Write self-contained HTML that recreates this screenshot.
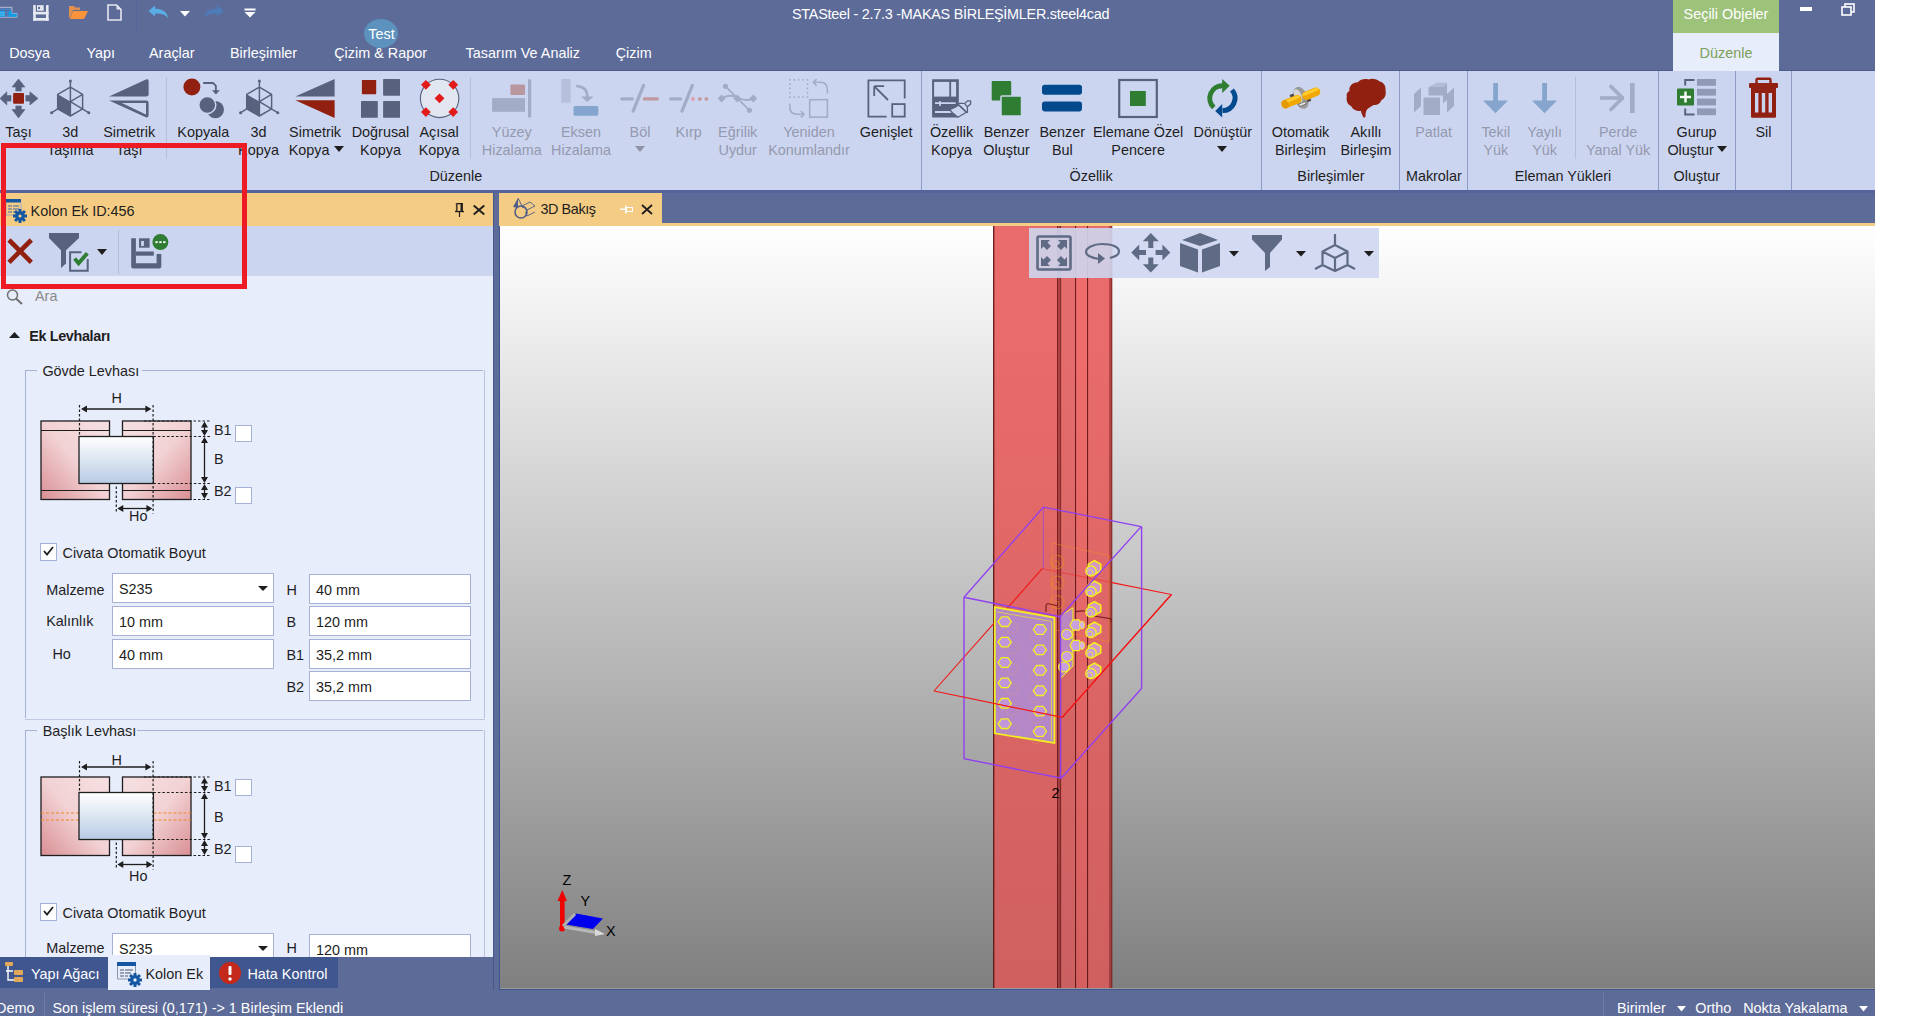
<!DOCTYPE html>
<html><head><meta charset="utf-8"><title>STASteel</title>
<style>
html,body{margin:0;padding:0;}
body{width:1914px;height:1016px;position:relative;overflow:hidden;background:#ffffff;font-family:"Liberation Sans",sans-serif;}
.t{position:absolute;white-space:nowrap;}
.r{position:absolute;box-sizing:content-box;}
.s{position:absolute;overflow:visible;}
</style></head><body>
<div class="r" style="left:0px;top:0px;width:1875px;height:1016px;background:#5D6B99;"></div>
<svg class="s" style="left:0px;top:0px" width="60" height="26" viewBox="0 0 60 26"><path d="M0 7.3H11.9V13.4H17V17.1H0" fill="none" stroke="#C4C9DE" stroke-width="0.9"/><rect x="0" y="8.3" width="11" height="1.8" fill="#4A80C2"/><rect x="0" y="10.8" width="5" height="6" fill="#10A0EA"/><rect x="0" y="12.4" width="5" height="0.8" fill="#7CC4EE"/><rect x="0" y="14.6" width="5" height="0.8" fill="#7CC4EE"/><rect x="6.1" y="10.8" width="2.1" height="6" fill="#4A80C2"/><rect x="8.5" y="10.8" width="3.3" height="6" fill="#10A0EA"/><rect x="11.8" y="13.6" width="5" height="3.2" fill="#10A0EA"/><g fill="#E8EAF2"><rect x="33.2" y="5" width="2.6" height="15.7" rx="0.5"/><rect x="46" y="5" width="2.6" height="15.7" rx="0.5"/><rect x="33.2" y="11.8" width="15.4" height="2.6"/><rect x="33.2" y="17.9" width="15.4" height="2.8" rx="0.5"/><rect x="37" y="5.2" width="6.6" height="5.5"/></g><rect x="38.1" y="6.9" width="2" height="2.2" fill="#5D6B99"/></svg>
<svg class="s" style="left:68px;top:5px" width="21" height="15" viewBox="0 0 21 15"><path d="M1 1H6L7 2.5H12V5H5L2 13H1Z" fill="#E0904E"/><path d="M5 6H20L16 14H2Z" fill="#F9933A"/></svg>
<svg class="s" style="left:107px;top:4px" width="15" height="17" viewBox="0 0 15 17"><path d="M1 1H9.5L14 5.5V16H1Z" fill="none" stroke="#E4E6F0" stroke-width="1.6"/><path d="M9.5 1V5.5H14Z" fill="#E4E6F0"/></svg>
<div class="r" style="left:136px;top:0;width:1px;height:33px;background:#56649A"></div>
<svg class="s" style="left:148px;top:5px" width="21" height="14" viewBox="0 0 21 14"><path d="M0.5 6L7 0.5V3.8C13 3.8 19 6 20 13C17 9 13 8 7 8.5V11.5Z" fill="#5AAEE6"/></svg>
<svg class="s" style="left:180px;top:11px" width="10" height="6" viewBox="0 0 10 6"><path d="M0 0H10L5 5.5Z" fill="#fff"/></svg>
<svg class="s" style="left:203px;top:5px" width="21" height="14" viewBox="0 0 21 14"><path d="M20.5 6L14 0.5V3.8C8 3.8 2 6 1 13C4 9 8 8 14 8.5V11.5Z" fill="#4E7CB8"/></svg>
<svg class="s" style="left:244px;top:8px" width="12" height="10" viewBox="0 0 12 10"><rect x="0.5" y="0.5" width="11" height="2" fill="#fff"/><path d="M0.5 4H11.5L6 9.5Z" fill="#fff"/></svg>
<div class="t" style="left:792.0px;top:6.8px;font-size:14.4px;line-height:14.4px;color:#FFFFFF;font-weight:400;letter-spacing:-0.25px">STASteel - 2.7.3 -MAKAS BİRLEŞİMLER.steel4cad</div>
<div class="r" style="left:1673px;top:0px;width:106px;height:33px;background:#9DC27A;"></div>
<div class="t" style="left:1576.0px;width:300px;text-align:center;top:6.8px;font-size:14.4px;line-height:14.4px;color:#FFFFFF;font-weight:400;">Seçili Objeler</div>
<div class="r" style="left:1673px;top:33px;width:106px;height:38px;background:#E8EDFC;"></div>
<div class="t" style="left:1576.0px;width:300px;text-align:center;top:45.6px;font-size:14.4px;line-height:14.4px;color:#7BA05A;font-weight:400;">Düzenle</div>
<div class="r" style="left:1800px;top:7px;width:12px;height:4px;background:#FFFFFF;"></div>
<svg class="s" style="left:1841px;top:3px;" width="14" height="13" viewBox="0 0 14 13"><rect x="4" y="1" width="9" height="8" fill="none" stroke="#fff" stroke-width="1.6"/><rect x="1" y="4" width="9" height="8" fill="#5D6B99" stroke="#fff" stroke-width="1.6"/></svg>
<div class="r" style="left:364px;top:19px;width:34px;height:29px;border-radius:50%;background:#5C92BD"></div>
<div class="t" style="left:231.5px;width:300px;text-align:center;top:26.7px;font-size:14.4px;line-height:14.4px;color:#FFFFFF;font-weight:400;">Test</div>
<div class="t" style="left:9.2px;top:45.6px;font-size:14.4px;line-height:14.4px;color:#FFFFFF;font-weight:400;">Dosya</div>
<div class="t" style="left:86.5px;top:45.6px;font-size:14.4px;line-height:14.4px;color:#FFFFFF;font-weight:400;">Yapı</div>
<div class="t" style="left:149.0px;top:45.6px;font-size:14.4px;line-height:14.4px;color:#FFFFFF;font-weight:400;">Araçlar</div>
<div class="t" style="left:230.0px;top:45.6px;font-size:14.4px;line-height:14.4px;color:#FFFFFF;font-weight:400;">Birleşimler</div>
<div class="t" style="left:334.2px;top:45.6px;font-size:14.4px;line-height:14.4px;color:#FFFFFF;font-weight:400;">Çizim &amp; Rapor</div>
<div class="t" style="left:465.6px;top:45.6px;font-size:14.4px;line-height:14.4px;color:#FFFFFF;font-weight:400;">Tasarım Ve Analiz</div>
<div class="t" style="left:615.7px;top:45.6px;font-size:14.4px;line-height:14.4px;color:#FFFFFF;font-weight:400;">Çizim</div>
<div class="r" style="left:0px;top:70px;width:1673px;height:1px;background:#4E5C8C;"></div>
<div class="r" style="left:1779px;top:70px;width:96px;height:1px;background:#4E5C8C;"></div>
<div class="r" style="left:0px;top:71px;width:1875px;height:119px;background:#CCD5F0;"></div>
<div class="r" style="left:0px;top:190px;width:1875px;height:3px;background:#55639A;"></div>
<div class="t" style="left:-131.5px;width:300px;text-align:center;top:124.9px;font-size:14.4px;line-height:14.4px;color:#1E1E1E;font-weight:400;">Taşı</div>
<div class="t" style="left:-79.7px;width:300px;text-align:center;top:124.9px;font-size:14.4px;line-height:14.4px;color:#1E1E1E;font-weight:400;">3d</div>
<div class="t" style="left:-79.7px;width:300px;text-align:center;top:143.1px;font-size:14.4px;line-height:14.4px;color:#1E1E1E;font-weight:400;">Taşıma</div>
<div class="t" style="left:-20.8px;width:300px;text-align:center;top:124.9px;font-size:14.4px;line-height:14.4px;color:#1E1E1E;font-weight:400;">Simetrik</div>
<div class="t" style="left:-20.8px;width:300px;text-align:center;top:143.1px;font-size:14.4px;line-height:14.4px;color:#1E1E1E;font-weight:400;">Taşı</div>
<div class="t" style="left:53.3px;width:300px;text-align:center;top:124.9px;font-size:14.4px;line-height:14.4px;color:#1E1E1E;font-weight:400;">Kopyala</div>
<div class="t" style="left:108.5px;width:300px;text-align:center;top:124.9px;font-size:14.4px;line-height:14.4px;color:#1E1E1E;font-weight:400;">3d</div>
<div class="t" style="left:108.5px;width:300px;text-align:center;top:143.1px;font-size:14.4px;line-height:14.4px;color:#1E1E1E;font-weight:400;">Kopya</div>
<div class="t" style="left:165.1px;width:300px;text-align:center;top:124.9px;font-size:14.4px;line-height:14.4px;color:#1E1E1E;font-weight:400;">Simetrik</div>
<div class="t" style="left:159.1px;width:300px;text-align:center;top:143.1px;font-size:14.4px;line-height:14.4px;color:#1E1E1E;font-weight:400;">Kopya</div>
<div class="t" style="left:230.5px;width:300px;text-align:center;top:124.9px;font-size:14.4px;line-height:14.4px;color:#1E1E1E;font-weight:400;">Doğrusal</div>
<div class="t" style="left:230.5px;width:300px;text-align:center;top:143.1px;font-size:14.4px;line-height:14.4px;color:#1E1E1E;font-weight:400;">Kopya</div>
<div class="t" style="left:289.1px;width:300px;text-align:center;top:124.9px;font-size:14.4px;line-height:14.4px;color:#1E1E1E;font-weight:400;">Açısal</div>
<div class="t" style="left:289.1px;width:300px;text-align:center;top:143.1px;font-size:14.4px;line-height:14.4px;color:#1E1E1E;font-weight:400;">Kopya</div>
<div class="t" style="left:361.8px;width:300px;text-align:center;top:124.9px;font-size:14.4px;line-height:14.4px;color:#9499AE;font-weight:400;">Yüzey</div>
<div class="t" style="left:361.8px;width:300px;text-align:center;top:143.1px;font-size:14.4px;line-height:14.4px;color:#9499AE;font-weight:400;">Hizalama</div>
<div class="t" style="left:431.0px;width:300px;text-align:center;top:124.9px;font-size:14.4px;line-height:14.4px;color:#9499AE;font-weight:400;">Eksen</div>
<div class="t" style="left:431.0px;width:300px;text-align:center;top:143.1px;font-size:14.4px;line-height:14.4px;color:#9499AE;font-weight:400;">Hizalama</div>
<div class="t" style="left:490.0px;width:300px;text-align:center;top:124.9px;font-size:14.4px;line-height:14.4px;color:#9499AE;font-weight:400;">Böl</div>
<svg class="s" style="left:635px;top:146px;" width="10" height="6" viewBox="0 0 10 6"><path d="M0 0H10L5 6Z" fill="#8E93A6"/></svg>
<div class="t" style="left:538.7px;width:300px;text-align:center;top:124.9px;font-size:14.4px;line-height:14.4px;color:#9499AE;font-weight:400;">Kırp</div>
<div class="t" style="left:587.7px;width:300px;text-align:center;top:124.9px;font-size:14.4px;line-height:14.4px;color:#9499AE;font-weight:400;">Eğrilik</div>
<div class="t" style="left:587.7px;width:300px;text-align:center;top:143.1px;font-size:14.4px;line-height:14.4px;color:#9499AE;font-weight:400;">Uydur</div>
<div class="t" style="left:659.0px;width:300px;text-align:center;top:124.9px;font-size:14.4px;line-height:14.4px;color:#9499AE;font-weight:400;">Yeniden</div>
<div class="t" style="left:659.0px;width:300px;text-align:center;top:143.1px;font-size:14.4px;line-height:14.4px;color:#9499AE;font-weight:400;">Konumlandır</div>
<div class="t" style="left:736.2px;width:300px;text-align:center;top:124.9px;font-size:14.4px;line-height:14.4px;color:#1E1E1E;font-weight:400;">Genişlet</div>
<div class="t" style="left:801.5px;width:300px;text-align:center;top:124.9px;font-size:14.4px;line-height:14.4px;color:#1E1E1E;font-weight:400;">Özellik</div>
<div class="t" style="left:801.5px;width:300px;text-align:center;top:143.1px;font-size:14.4px;line-height:14.4px;color:#1E1E1E;font-weight:400;">Kopya</div>
<div class="t" style="left:856.5px;width:300px;text-align:center;top:124.9px;font-size:14.4px;line-height:14.4px;color:#1E1E1E;font-weight:400;">Benzer</div>
<div class="t" style="left:856.5px;width:300px;text-align:center;top:143.1px;font-size:14.4px;line-height:14.4px;color:#1E1E1E;font-weight:400;">Oluştur</div>
<div class="t" style="left:912.3px;width:300px;text-align:center;top:124.9px;font-size:14.4px;line-height:14.4px;color:#1E1E1E;font-weight:400;">Benzer</div>
<div class="t" style="left:912.3px;width:300px;text-align:center;top:143.1px;font-size:14.4px;line-height:14.4px;color:#1E1E1E;font-weight:400;">Bul</div>
<div class="t" style="left:988.1px;width:300px;text-align:center;top:124.9px;font-size:14.4px;line-height:14.4px;color:#1E1E1E;font-weight:400;">Elemane Özel</div>
<div class="t" style="left:988.1px;width:300px;text-align:center;top:143.1px;font-size:14.4px;line-height:14.4px;color:#1E1E1E;font-weight:400;">Pencere</div>
<div class="t" style="left:1072.8px;width:300px;text-align:center;top:124.9px;font-size:14.4px;line-height:14.4px;color:#1E1E1E;font-weight:400;">Dönüştür</div>
<svg class="s" style="left:1217px;top:146px;" width="10" height="6" viewBox="0 0 10 6"><path d="M0 0H10L5 6Z" fill="#1E1E1E"/></svg>
<div class="t" style="left:1150.5px;width:300px;text-align:center;top:124.9px;font-size:14.4px;line-height:14.4px;color:#1E1E1E;font-weight:400;">Otomatik</div>
<div class="t" style="left:1150.5px;width:300px;text-align:center;top:143.1px;font-size:14.4px;line-height:14.4px;color:#1E1E1E;font-weight:400;">Birleşim</div>
<div class="t" style="left:1216.0px;width:300px;text-align:center;top:124.9px;font-size:14.4px;line-height:14.4px;color:#1E1E1E;font-weight:400;">Akıllı</div>
<div class="t" style="left:1216.0px;width:300px;text-align:center;top:143.1px;font-size:14.4px;line-height:14.4px;color:#1E1E1E;font-weight:400;">Birleşim</div>
<div class="t" style="left:1283.6px;width:300px;text-align:center;top:124.9px;font-size:14.4px;line-height:14.4px;color:#9499AE;font-weight:400;">Patlat</div>
<div class="t" style="left:1345.8px;width:300px;text-align:center;top:124.9px;font-size:14.4px;line-height:14.4px;color:#9499AE;font-weight:400;">Tekil</div>
<div class="t" style="left:1345.8px;width:300px;text-align:center;top:143.1px;font-size:14.4px;line-height:14.4px;color:#9499AE;font-weight:400;">Yük</div>
<div class="t" style="left:1394.6px;width:300px;text-align:center;top:124.9px;font-size:14.4px;line-height:14.4px;color:#9499AE;font-weight:400;">Yayılı</div>
<div class="t" style="left:1394.6px;width:300px;text-align:center;top:143.1px;font-size:14.4px;line-height:14.4px;color:#9499AE;font-weight:400;">Yük</div>
<div class="t" style="left:1468.1px;width:300px;text-align:center;top:124.9px;font-size:14.4px;line-height:14.4px;color:#9499AE;font-weight:400;">Perde</div>
<div class="t" style="left:1468.1px;width:300px;text-align:center;top:143.1px;font-size:14.4px;line-height:14.4px;color:#9499AE;font-weight:400;">Yanal Yük</div>
<div class="t" style="left:1546.6px;width:300px;text-align:center;top:124.9px;font-size:14.4px;line-height:14.4px;color:#1E1E1E;font-weight:400;">Gurup</div>
<div class="t" style="left:1540.6px;width:300px;text-align:center;top:143.1px;font-size:14.4px;line-height:14.4px;color:#1E1E1E;font-weight:400;">Oluştur</div>
<div class="t" style="left:1613.5px;width:300px;text-align:center;top:124.9px;font-size:14.4px;line-height:14.4px;color:#1E1E1E;font-weight:400;">Sil</div>
<svg class="s" style="left:334px;top:146px;" width="10" height="6" viewBox="0 0 10 6"><path d="M0 0H10L5 6Z" fill="#1E1E1E"/></svg>
<svg class="s" style="left:1717px;top:146px;" width="10" height="6" viewBox="0 0 10 6"><path d="M0 0H10L5 6Z" fill="#1E1E1E"/></svg>
<div class="t" style="left:305.8px;width:300px;text-align:center;top:169.1px;font-size:14.4px;line-height:14.4px;color:#1E1E1E;font-weight:400;">Düzenle</div>
<div class="t" style="left:941.1px;width:300px;text-align:center;top:169.1px;font-size:14.4px;line-height:14.4px;color:#1E1E1E;font-weight:400;">Özellik</div>
<div class="t" style="left:1180.9px;width:300px;text-align:center;top:169.1px;font-size:14.4px;line-height:14.4px;color:#1E1E1E;font-weight:400;">Birleşimler</div>
<div class="t" style="left:1283.9px;width:300px;text-align:center;top:169.1px;font-size:14.4px;line-height:14.4px;color:#1E1E1E;font-weight:400;">Makrolar</div>
<div class="t" style="left:1412.9px;width:300px;text-align:center;top:169.1px;font-size:14.4px;line-height:14.4px;color:#1E1E1E;font-weight:400;">Eleman Yükleri</div>
<div class="t" style="left:1546.8px;width:300px;text-align:center;top:169.1px;font-size:14.4px;line-height:14.4px;color:#1E1E1E;font-weight:400;">Oluştur</div>
<div class="r" style="left:166px;top:77px;width:1px;height:82px;background:#B7BFD8;"></div>
<div class="r" style="left:470px;top:77px;width:1px;height:82px;background:#B7BFD8;"></div>
<div class="r" style="left:1575px;top:77px;width:1px;height:82px;background:#B7BFD8;"></div>
<div class="r" style="left:921px;top:71px;width:1px;height:119px;background:#8F9CC4;"></div>
<div class="r" style="left:1261px;top:71px;width:1px;height:119px;background:#8F9CC4;"></div>
<div class="r" style="left:1399px;top:71px;width:1px;height:119px;background:#8F9CC4;"></div>
<div class="r" style="left:1467px;top:71px;width:1px;height:119px;background:#8F9CC4;"></div>
<div class="r" style="left:1658px;top:71px;width:1px;height:119px;background:#8F9CC4;"></div>
<div class="r" style="left:1735px;top:71px;width:1px;height:119px;background:#8F9CC4;"></div>
<div class="r" style="left:1791px;top:71px;width:1px;height:119px;background:#8F9CC4;"></div>
<svg class="s" style="left:0px;top:78px" width="40" height="42" viewBox="0 0 40 42"><path d="M18.5 1L25 9H21.3V13H15.8V9H12Z M18.5 40L25 31.5H21.3V28H15.8V31.5H12Z M0 20.4L6.8 13.8V17.5H11V23.1H6.8V27Z M38 20.4L29.9 13.8V17.5H25.8V23.1H29.9V27Z" fill="#56627E" stroke="#56627E" stroke-width="0.6" stroke-linejoin="round"/><rect x="13.1" y="15" width="10.9" height="10.8" rx="1" fill="#912010"/></svg>
<svg class="s" style="left:50px;top:78px" width="40" height="40" viewBox="0 0 40 40"><path d="M7.7 16.3L20.4 23.6V38L7.7 30.8Z" fill="#56627E"/><path d="M20.4 9.1L32.6 16.3V30.8L20.4 38L7.7 30.8V16.3Z M20.4 3V38 M20.4 23.6L32.6 16.3 M20.4 23.6L39 34.9 M7.7 30.8L1.4 34.9" fill="none" stroke="#56627E" stroke-width="1.5" stroke-linejoin="round"/><circle cx="20.4" cy="3" r="1.5" fill="#56627E"/><circle cx="1.6" cy="34.8" r="1.5" fill="#56627E"/><circle cx="38.8" cy="34.8" r="1.5" fill="#56627E"/></svg>
<svg class="s" style="left:108px;top:78px" width="42" height="42" viewBox="0 0 42 42"><path d="M1 18.6L38.5 1.3Q40.6 0.6 40.6 3V16.3Q40.6 18.6 38.3 18.6Z" fill="#56627E"/><path fill-rule="evenodd" d="M1 22.4H38.3Q40.6 22.4 40.6 24.7V37.3Q40.6 40.2 37.8 39.2Z M13.8 24.9L38 36.4V24.9Z" fill="#56627E"/></svg>
<svg class="s" style="left:183px;top:78px" width="42" height="42" viewBox="0 0 42 42"><circle cx="8.9" cy="9.1" r="8.5" fill="#912010"/><path d="M20.2 5H30.1L32.9 7.8V13" fill="none" stroke="#56627E" stroke-width="1.8"/><path d="M29 12.3H36.9L32.9 16.6Z" fill="#56627E"/><circle cx="32.4" cy="31.6" r="8.6" fill="#56627E"/><circle cx="24.3" cy="27" r="8.5" fill="#56627E" stroke="#CCD5F0" stroke-width="1.5"/></svg>
<svg class="s" style="left:239px;top:78px" width="40" height="40" viewBox="0 0 40 40"><path d="M7.7 16.3L20.4 23.6V38L7.7 30.8Z" fill="#56627E"/><path d="M20.4 9.1L32.6 16.3V30.8L20.4 38L7.7 30.8V16.3Z M20.4 3V38 M20.4 23.6L32.6 16.3 M20.4 23.6L39 34.9 M7.7 30.8L1.4 34.9" fill="none" stroke="#56627E" stroke-width="1.5" stroke-linejoin="round"/><circle cx="20.4" cy="3" r="1.5" fill="#56627E"/><circle cx="1.6" cy="34.8" r="1.5" fill="#56627E"/><circle cx="38.8" cy="34.8" r="1.5" fill="#56627E"/></svg>
<svg class="s" style="left:295px;top:78px" width="41" height="41" viewBox="0 0 41 41"><path d="M0.3 18.6L39.6 0.9V18.6Z" fill="#56627E"/><path d="M0.3 22.2H39.6V39.9Z" fill="#912010"/></svg>
<svg class="s" style="left:361px;top:78px" width="40" height="41" viewBox="0 0 40 41"><rect x="0.9" y="1.9" width="14.3" height="14.3" rx="0.6" fill="#912010"/><rect x="22.1" y="1" width="16.9" height="16.7" rx="0.6" fill="#56627E"/><rect x="0" y="23.1" width="16.8" height="16.7" rx="0.6" fill="#56627E"/><rect x="22.1" y="23.1" width="16.9" height="16.7" rx="0.6" fill="#56627E"/></svg>
<svg class="s" style="left:420px;top:78px" width="41" height="41" viewBox="0 0 41 41"><circle cx="19.6" cy="20.4" r="19.2" fill="#E2E6F0" stroke="#56627E" stroke-width="1.1"/><path d="M5.9 1.8999999999999995L10.8 6.8L5.9 11.7L1.0 6.8Z" fill="#E21A1A"/><path d="M33.2 1.8999999999999995L38.1 6.8L33.2 11.7L28.300000000000004 6.8Z" fill="#E21A1A"/><path d="M19.5 15.4L24.4 20.3L19.5 25.200000000000003L14.6 20.3Z" fill="#E21A1A"/><path d="M5.9 29.200000000000003L10.8 34.1L5.9 39.0L1.0 34.1Z" fill="#E21A1A"/><path d="M33.2 29.200000000000003L38.1 34.1L33.2 39.0L28.300000000000004 34.1Z" fill="#E21A1A"/></svg>
<svg class="s" style="left:492px;top:78px" width="40" height="41" viewBox="0 0 40 41"><rect x="18.4" y="6.5" width="14.6" height="10.4" rx="0.8" fill="#B8979E"/><rect x="0.1" y="20.1" width="32.9" height="13.7" fill="#A1ADC6"/><rect x="36" y="1" width="3.2" height="38.8" rx="1.6" fill="#A1ADC6"/></svg>
<svg class="s" style="left:561px;top:78px" width="40" height="41" viewBox="0 0 40 41"><rect x="0.2" y="1" width="9.5" height="23.7" rx="0.6" fill="#B6C0DC"/><path d="M15.2 8Q26.4 8.5 26.4 19" fill="none" stroke="#A1ADC6" stroke-width="2.6"/><path d="M20 18.6H32.5L26.2 24Z" fill="#A1ADC6"/><rect x="12.5" y="28" width="24.8" height="9.7" rx="1.5" fill="#84A5CD"/></svg>
<svg class="s" style="left:620px;top:78px" width="40" height="40" viewBox="0 0 40 40"><path d="M1.9 20.9H12.2 M23.5 7.5L13.2 33.1" stroke="#A1ADC6" stroke-width="3.3" stroke-linecap="round"/><path d="M24.4 20.9H37.4" stroke="#C0999F" stroke-width="3.3" stroke-linecap="round"/></svg>
<svg class="s" style="left:669px;top:78px" width="40" height="40" viewBox="0 0 40 40"><path d="M1.7 20.9H11.7 M23.3 7.5L13 33.1" stroke="#A1ADC6" stroke-width="3.3" stroke-linecap="round"/><circle cx="24" cy="20.9" r="2" fill="#E3A0AE"/><circle cx="30.8" cy="20.9" r="2" fill="#C59DA5"/><circle cx="37.4" cy="20.9" r="2" fill="#C59DA5"/></svg>
<svg class="s" style="left:718px;top:78px" width="40" height="40" viewBox="0 0 40 40"><path d="M3.6 20.5Q11 15.5 19.3 19.5Q27 24 35.3 20.5" fill="none" stroke="#A1ADC6" stroke-width="2"/><path d="M7.5 8.3L31.5 32.3" stroke="#A1ADC6" stroke-width="1.8"/><path d="M3.6 16.6L7.5 20.5L3.6 24.4L-0.3 20.5Z M19.3 16.6L23.2 20.5L19.3 24.4L15.4 20.5Z M35.3 16.6L39.2 20.5L35.3 24.4L31.4 20.5Z" fill="#A1ADC6"/><circle cx="7.5" cy="8.3" r="2.6" fill="#A1ADC6"/><circle cx="31.5" cy="32.3" r="2.6" fill="#A1ADC6"/></svg>
<svg class="s" style="left:789px;top:78px" width="40" height="41" viewBox="0 0 40 41"><rect x="0.15" y="1.05" width="1.6" height="1.6" fill="#A1ADC6"/><rect x="4.52" y="1.05" width="1.6" height="1.6" fill="#A1ADC6"/><rect x="8.89" y="1.05" width="1.6" height="1.6" fill="#A1ADC6"/><rect x="13.26" y="1.05" width="1.6" height="1.6" fill="#A1ADC6"/><rect x="17.63" y="1.05" width="1.6" height="1.6" fill="#A1ADC6"/><rect x="0.15" y="18.25" width="1.6" height="1.6" fill="#A1ADC6"/><rect x="4.52" y="18.25" width="1.6" height="1.6" fill="#A1ADC6"/><rect x="8.89" y="18.25" width="1.6" height="1.6" fill="#A1ADC6"/><rect x="13.26" y="18.25" width="1.6" height="1.6" fill="#A1ADC6"/><rect x="17.63" y="18.25" width="1.6" height="1.6" fill="#A1ADC6"/><rect x="0.15" y="5.35" width="1.6" height="1.6" fill="#A1ADC6"/><rect x="0.15" y="9.65" width="1.6" height="1.6" fill="#A1ADC6"/><rect x="0.15" y="13.95" width="1.6" height="1.6" fill="#A1ADC6"/><rect x="17.65" y="5.35" width="1.6" height="1.6" fill="#A1ADC6"/><rect x="17.65" y="9.65" width="1.6" height="1.6" fill="#A1ADC6"/><rect x="17.65" y="13.95" width="1.6" height="1.6" fill="#A1ADC6"/><rect x="20.7" y="21.7" width="17.7" height="17.4" fill="none" stroke="#A1ADC6" stroke-width="1.6"/><path d="M38.4 15.4V11.8Q38.4 4.2 31.2 4.2H24.5" fill="none" stroke="#A1ADC6" stroke-width="1.6"/><path d="M27.6 1.2L24.4 4.2L27.6 7.6" fill="none" stroke="#A1ADC6" stroke-width="1.6"/><path d="M0.9 25.6V29.6Q0.9 36.2 8.2 36.2H15" fill="none" stroke="#A1ADC6" stroke-width="1.6"/><path d="M11.8 33L15 36.2L11.8 39.4" fill="none" stroke="#A1ADC6" stroke-width="1.6"/></svg>
<svg class="s" style="left:867px;top:78px" width="40" height="41" viewBox="0 0 40 41"><path d="M19.6 38.6H1.4V2.4H37.7V20.4" fill="none" stroke="#56627E" stroke-width="1.8"/><rect x="25.2" y="26.1" width="12.5" height="12.5" fill="none" stroke="#56627E" stroke-width="1.8"/><path d="M21 22L7.6 8.6 M7.2 8.2H17.1 M7.2 8.2V18" fill="none" stroke="#56627E" stroke-width="1.8"/></svg>
<svg class="s" style="left:932px;top:78px" width="40" height="41" viewBox="0 0 40 41"><path d="M0.1 1.2H26.8V27L17.7 31.7L20.4 34.7L26 39.6H0.1Z" fill="#56627E"/><rect x="2.1" y="3.9" width="15.2" height="14.7" fill="#CCD5F0"/><rect x="19.1" y="3.9" width="5" height="14.7" fill="#CCD5F0"/><path d="M3 25.2H23.6 M3 34H19.5" stroke="#CCD5F0" stroke-width="1.8"/><path d="M8 22.9V27.9" stroke="#CCD5F0" stroke-width="1.6"/><path d="M17.7 31.7L23.2 29.2L26.8 27L34.5 34.2L25.9 39.2L20.4 34.7Z" fill="#CCD5F0" stroke="#56627E" stroke-width="1.3" stroke-linejoin="round"/><path d="M26.8 25.4H32.2 M26.8 27L34.5 34.2 M35.4 28.8V35.1" stroke="#56627E" stroke-width="1.3"/><path d="M32.7 25.6L35.4 22.9H38.6V26.1L35.4 28.8Z" fill="#CCD5F0" stroke="#56627E" stroke-width="1.3" stroke-linejoin="round"/></svg>
<svg class="s" style="left:991px;top:81px" width="32" height="36" viewBox="0 0 32 36"><rect x="0.7" y="0" width="19.5" height="19.5" rx="1" fill="#2F7D32"/><rect x="10" y="15" width="20.5" height="20" rx="1" fill="#2F7D32" stroke="#CCD5F0" stroke-width="1.5"/></svg>
<svg class="s" style="left:1042px;top:84px" width="41" height="29" viewBox="0 0 41 29"><rect x="0" y="0.8" width="40" height="10" rx="2.8" fill="#024A8D"/><rect x="0" y="17.4" width="40" height="10" rx="2.8" fill="#024A8D"/></svg>
<svg class="s" style="left:1118px;top:78px" width="41" height="41" viewBox="0 0 41 41"><rect x="1.2" y="2" width="37.6" height="37" fill="none" stroke="#56627E" stroke-width="2.2"/><rect x="12" y="13" width="15.8" height="15" fill="#2F7D32"/></svg>
<svg class="s" style="left:1206px;top:78px" width="33" height="41" viewBox="0 0 33 41"><path d="M7.8 29.5A12.5 12.5 0 0 1 17 7.8" fill="none" stroke="#2F7D32" stroke-width="5"/><path d="M16.2 0.9L23.7 7.7L16.2 15Z" fill="#2F7D32"/><path d="M26 12A12.5 12.5 0 0 1 16.5 32.6" fill="none" stroke="#024A8D" stroke-width="5"/><path d="M16.2 26L9.2 32.9L16.2 39.6Z" fill="#024A8D"/></svg>
<svg class="s" style="left:1278px;top:84px" width="44" height="28" viewBox="0 0 44 28"><g transform="translate(22.5 14) rotate(-22)"><ellipse cx="0.5" cy="0" rx="6.8" ry="11.5" fill="#9A9A9A"/><ellipse cx="-1.5" cy="-2.5" rx="3.5" ry="7.5" fill="#D6D6D6"/><rect x="-9" y="-7" width="4" height="3" fill="#4E4E4E"/><rect x="5" y="3.5" width="4" height="3" fill="#4E4E4E"/><rect x="2" y="-4.3" width="19" height="8.6" rx="4.3" fill="#F0A800"/><rect x="3" y="-3.5" width="17" height="3" rx="1.5" fill="#FFCB2E"/><rect x="-20.5" y="-4.3" width="21.5" height="8.6" rx="4.3" fill="#F0A800"/><rect x="-19.5" y="-3.5" width="19.5" height="3" rx="1.5" fill="#FFCB2E"/><ellipse cx="-16.5" cy="0" rx="3.2" ry="4.3" fill="#E29A00"/><rect x="-4" y="5" width="7" height="2.6" fill="#E8E8E8" stroke="#555" stroke-width="0.6"/></g></svg>
<svg class="s" style="left:1346px;top:78px" width="41" height="41" viewBox="0 0 41 41"><path d="M3.5 13C2.5 8 7 4 12 4.2C14 1.5 19 0.5 22.5 1.5C26 0 31 0.8 33.5 3.5C37.5 4 40.2 8 39.5 12.5C40.5 16.5 38.8 20.8 35.5 22C34.5 25.5 31 27.5 27.5 27C25.5 28.5 23 29.5 21.5 31C20 32.5 19.5 35.5 19.5 37.5C19.5 38.8 18.8 39.8 18 39.8C16.5 38.5 15.5 35.5 15 33C11 33.5 6.5 31.5 5 28C1.5 26.5 0 22.5 0.8 19C0 16 1.5 13.8 3.5 13Z" fill="#912010"/></svg>
<svg class="s" style="left:1414px;top:82px" width="41" height="34" viewBox="0 0 41 34"><path d="M14.5 5L23 0.5H33L29 5Z" fill="#B4BDD6"/><rect x="14.5" y="5" width="14.5" height="8.5" fill="#A1ADC6"/><path d="M29 5L33 1V18L29 21.5Z" fill="#A1ADC6"/><rect x="9.5" y="15.5" width="16.5" height="17.5" fill="#A1ADC6"/><path d="M0 12L7 5.5V24L0 30.5Z" fill="#A1ADC6"/><path d="M33 12L40 5.5V24L33 30.5Z" fill="#A1ADC6"/></svg>
<svg class="s" style="left:1483px;top:83px" width="26" height="31" viewBox="0 0 26 31"><rect x="10.2" y="0" width="4.8" height="20" fill="#85A5CD"/><path d="M0 17.5H25L12.5 30.3Z" fill="#85A5CD"/></svg>
<svg class="s" style="left:1532px;top:83px" width="26" height="31" viewBox="0 0 26 31"><rect x="10.2" y="0" width="4.8" height="20" fill="#85A5CD"/><path d="M0 17.5H25L12.5 30.3Z" fill="#85A5CD"/></svg>
<svg class="s" style="left:1600px;top:83px" width="36" height="31" viewBox="0 0 36 31"><path d="M0 15H24" stroke="#A1ADC6" stroke-width="3.6"/><path d="M11 3.5L22.5 15L11 26.5" fill="none" stroke="#A1ADC6" stroke-width="3.8" stroke-linecap="round" stroke-linejoin="round"/><rect x="30" y="0" width="4.6" height="30" fill="#A1ADC6"/></svg>
<svg class="s" style="left:1677px;top:78px" width="40" height="39" viewBox="0 0 40 39"><rect x="20" y="1" width="19" height="6.8" fill="#8F9AB6"/><rect x="20" y="10.8" width="19" height="6.8" fill="#8F9AB6"/><rect x="20" y="20.6" width="19" height="6.8" fill="#8F9AB6"/><rect x="20" y="30.4" width="19" height="6.8" fill="#8F9AB6"/><path d="M17.5 2H8.2V7.5 M8.2 30.5V36.6H17.5" fill="none" stroke="#56627E" stroke-width="2"/><rect x="0" y="10.5" width="17" height="17" rx="1" fill="#2F7D32"/><path d="M8.5 13.5V24.5 M3 19H14" stroke="#fff" stroke-width="2.4"/></svg>
<svg class="s" style="left:1749px;top:78px" width="30" height="41" viewBox="0 0 30 41"><path d="M7.5 6V2Q7.5 0.8 8.7 0.8H20.3Q21.5 0.8 21.5 2V6" fill="none" stroke="#912010" stroke-width="2.4"/><rect x="0" y="5" width="29" height="5" rx="1" fill="#912010"/><path d="M2 10H27V38.8Q27 39.8 26 39.8H3Q2 39.8 2 38.8Z" fill="#912010"/><rect x="6" y="15" width="3.4" height="19.5" fill="#CCD5F0"/><rect x="12.8" y="15" width="3.4" height="19.5" fill="#CCD5F0"/><rect x="19.6" y="15" width="3.4" height="19.5" fill="#CCD5F0"/></svg>
<div class="r" style="left:0px;top:193px;width:493px;height:33px;background:#F5CC84;"></div>
<svg class="s" style="left:6px;top:199px" width="21" height="24" viewBox="0 0 21 24"><rect x="0" y="0" width="15" height="3.5" fill="#1457A0"/><path d="M0 3.5V16H10" fill="none" stroke="#A0A8BC" stroke-width="1"/><path d="M15 3.5V10" stroke="#A0A8BC" stroke-width="1"/><path d="M2 7H6 M7 7H13 M2 10H6 M7 10H13 M2 13H6 M7 13H10" stroke="#7E889E" stroke-width="1.4"/><g transform="translate(14 17)"><circle r="4.8" fill="#1457A0"/><circle r="1.6" fill="#F5CC84"/><rect x="-1.5" y="-7" width="3" height="3.5" fill="#1457A0" transform="rotate(0)"/><rect x="-1.5" y="-7" width="3" height="3.5" fill="#1457A0" transform="rotate(45)"/><rect x="-1.5" y="-7" width="3" height="3.5" fill="#1457A0" transform="rotate(90)"/><rect x="-1.5" y="-7" width="3" height="3.5" fill="#1457A0" transform="rotate(135)"/><rect x="-1.5" y="-7" width="3" height="3.5" fill="#1457A0" transform="rotate(180)"/><rect x="-1.5" y="-7" width="3" height="3.5" fill="#1457A0" transform="rotate(225)"/><rect x="-1.5" y="-7" width="3" height="3.5" fill="#1457A0" transform="rotate(270)"/><rect x="-1.5" y="-7" width="3" height="3.5" fill="#1457A0" transform="rotate(315)"/></g></svg>
<div class="t" style="left:30.6px;top:203.8px;font-size:14.4px;line-height:14.4px;color:#1E1E1E;font-weight:400;">Kolon Ek ID:456</div>
<svg class="s" style="left:454px;top:202px" width="12" height="16" viewBox="0 0 12 16"><rect x="1.9" y="1" width="7" height="1.3" fill="#1E1E1E"/><rect x="1.9" y="1" width="1.7" height="8.5" fill="#4A3E2C"/><rect x="6.5" y="1" width="2.4" height="8.5" fill="#1E1E1E"/><rect x="1" y="8.9" width="9" height="1.3" fill="#1E1E1E"/><rect x="4.9" y="10" width="1.2" height="5" fill="#1E1E1E"/></svg><svg class="s" style="left:473px;top:205px" width="12" height="10" viewBox="0 0 12 10"><path d="M0.7 0.5L11.3 9.5 M11.3 0.5L0.7 9.5" stroke="#1E1E1E" stroke-width="1.9"/></svg>
<div class="r" style="left:0px;top:226px;width:493px;height:50px;background:#CCD5F0;"></div>
<svg class="s" style="left:5px;top:236px" width="30" height="30" viewBox="0 0 30 30"><path d="M4 4L26.3 26.3 M26.3 4L4 26.3" stroke="#912010" stroke-width="4.6"/></svg>
<svg class="s" style="left:48px;top:233px" width="42" height="40" viewBox="0 0 42 40"><path d="M1 0H31V4.9L18 17.2V30.5L13 35V17.2L1 4.9Z" fill="#56627E"/><path d="M33.5 19.2H22.1V37.8H39.7V26" fill="none" stroke="#56627E" stroke-width="2"/><path d="M26.2 25.2L30.6 30.6L39.6 20" fill="none" stroke="#CCD5F0" stroke-width="6.5"/><path d="M26.6 25.6L30.6 30.3L39.3 20.2" fill="none" stroke="#2F7D32" stroke-width="3.8"/></svg>
<svg class="s" style="left:97px;top:249px" width="10" height="6" viewBox="0 0 10 6"><path d="M0 0H10L5 6Z" fill="#1E1E1E"/></svg>
<div class="r" style="left:118px;top:230px;width:1px;height:44px;background:#B4BCD6"></div>
<svg class="s" style="left:131px;top:232px" width="40" height="38" viewBox="0 0 40 38"><path d="M0.2 6.3H4.9V31.3H25.6V21.9H30.3V34.4Q30.3 36.4 28.3 36.4H2.2Q0.2 36.4 0.2 34.4Z" fill="#56627E"/><rect x="4.9" y="19.5" width="17.9" height="4.2" fill="#56627E"/><rect x="8" y="6.3" width="10.6" height="9.4" fill="#56627E"/><rect x="10.1" y="9" width="2.8" height="5" fill="#CCD5F0"/><circle cx="29.4" cy="10.1" r="8.6" fill="#CCD5F0"/><circle cx="29.4" cy="10.1" r="8" fill="#2F7D32"/><rect x="24.4" y="9.2" width="2.3" height="1.9" fill="#fff"/><rect x="28.3" y="9.2" width="2.3" height="1.9" fill="#fff"/><rect x="32.2" y="9.2" width="2.3" height="1.9" fill="#fff"/></svg>
<div class="r" style="left:0px;top:276px;width:493px;height:681px;background:#E8EDFC;"></div>
<div style="position:absolute;left:0;top:0;width:493px;height:957px;overflow:hidden"><svg class="s" style="left:6px;top:289px" width="19" height="16" viewBox="0 0 19 16"><circle cx="6.5" cy="6" r="5" fill="none" stroke="#707070" stroke-width="1.5"/><path d="M10 9.5L16 15" stroke="#707070" stroke-width="2"/></svg>
<div class="t" style="left:35.0px;top:289.3px;font-size:14.4px;line-height:14.4px;color:#8A8A8A;font-weight:400;">Ara</div>
<svg class="s" style="left:9px;top:332px" width="11" height="6" viewBox="0 0 11 6"><path d="M0 6L5.5 0L11 6Z" fill="#1E1E1E"/></svg>
<div class="t" style="left:29.2px;top:328.8px;font-size:14.4px;line-height:14.4px;color:#1E1E1E;font-weight:700;letter-spacing:-0.35px">Ek Levhaları</div>
<div class="r" style="left:25px;top:370px;width:1px;height:348px;background:#A5B2D6;"></div>
<div class="r" style="left:25px;top:370px;width:12px;height:1px;background:#A5B2D6;"></div>
<div class="r" style="left:142px;top:370px;width:341px;height:1px;background:#A5B2D6;"></div>
<div class="r" style="left:484px;top:370px;width:1px;height:348px;background:#B8C2DE;"></div>
<div class="r" style="left:25px;top:719px;width:460px;height:1px;background:#BFC8E2;"></div>
<div class="t" style="left:42.4px;top:363.6px;font-size:14.4px;line-height:14.4px;color:#1E1E1E;font-weight:400;">Gövde Levhası</div>
<div class="r" style="left:25px;top:730px;width:1px;height:369px;background:#A5B2D6;"></div>
<div class="r" style="left:25px;top:730px;width:12px;height:1px;background:#A5B2D6;"></div>
<div class="r" style="left:137px;top:730px;width:346px;height:1px;background:#A5B2D6;"></div>
<div class="r" style="left:484px;top:730px;width:1px;height:369px;background:#B8C2DE;"></div>
<div class="r" style="left:25px;top:1100px;width:460px;height:1px;background:#BFC8E2;"></div>
<div class="t" style="left:42.7px;top:723.6px;font-size:14.4px;line-height:14.4px;color:#1E1E1E;font-weight:400;">Başlık Levhası</div>
<svg class="s" style="left:31px;top:389px" width="230" height="140"><defs><linearGradient id="pg1" x1="0" y1="0" x2="1" y2="1"><stop offset="0" stop-color="#F6E0E2"/><stop offset="0.5" stop-color="#F2D2D4"/><stop offset="1" stop-color="#D98F94"/></linearGradient><linearGradient id="pg21" x1="0" y1="1" x2="1" y2="0"><stop offset="0" stop-color="#D98F94"/><stop offset="0.5" stop-color="#F2D2D4"/><stop offset="1" stop-color="#F6E0E2"/></linearGradient><linearGradient id="wb1" x1="0" y1="0" x2="0" y2="1"><stop offset="0" stop-color="#FFFFFF"/><stop offset="1" stop-color="#B8CBE4"/></linearGradient></defs><rect x="10.0" y="32.0" width="68.5" height="78.5" fill="url(#pg21)" stroke="#1E1E1E" stroke-width="1.3" /><rect x="91.5" y="32.0" width="68.5" height="78.5" fill="url(#pg1)" stroke="#1E1E1E" stroke-width="1.3" /><line x1="10.0" y1="41.5" x2="78.5" y2="41.5" stroke="#1E1E1E" stroke-width="1.2"/><line x1="91.5" y1="41.5" x2="160.0" y2="41.5" stroke="#1E1E1E" stroke-width="1.2"/><line x1="10.0" y1="101.5" x2="78.5" y2="101.5" stroke="#1E1E1E" stroke-width="1.2"/><line x1="91.5" y1="101.5" x2="160.0" y2="101.5" stroke="#1E1E1E" stroke-width="1.2"/><rect x="48.0" y="47.5" width="74.4" height="47.0" fill="url(#wb1)" stroke="#1E1E1E" stroke-width="1.3" /><line x1="48.5" y1="16.0" x2="48.5" y2="47.5" stroke="#1E1E1E" stroke-width="1.2" stroke-dasharray="2.5 2"/><line x1="122.1" y1="16.0" x2="122.1" y2="124.5" stroke="#1E1E1E" stroke-width="1.2" stroke-dasharray="2.5 2"/><line x1="85.3" y1="97.5" x2="85.3" y2="124.5" stroke="#1E1E1E" stroke-width="1.2" stroke-dasharray="2.5 2"/><line x1="52.0" y1="20.0" x2="118.4" y2="20.0" stroke="#1E1E1E" stroke-width="1.3"/><path d="M50.0 20.0l6 -3.5v7Z M120.4 20.0l-6 -3.5v7Z" fill="#1E1E1E"/><line x1="89.3" y1="119.5" x2="118.4" y2="119.5" stroke="#1E1E1E" stroke-width="1.3"/><path d="M86.3 119.5l6 -3.5v7Z M121.4 119.5l-6 -3.5v7Z" fill="#1E1E1E"/><line x1="113.0" y1="32.0" x2="180.0" y2="32.0" stroke="#1E1E1E" stroke-width="1.2" stroke-dasharray="2.5 2"/><line x1="122.4" y1="47.5" x2="180.0" y2="47.5" stroke="#1E1E1E" stroke-width="1.2" stroke-dasharray="2.5 2"/><line x1="122.4" y1="94.5" x2="180.0" y2="94.5" stroke="#1E1E1E" stroke-width="1.2" stroke-dasharray="2.5 2"/><line x1="113.0" y1="110.5" x2="180.0" y2="110.5" stroke="#1E1E1E" stroke-width="1.2" stroke-dasharray="2.5 2"/><line x1="173.5" y1="35.0" x2="173.5" y2="44.5" stroke="#1E1E1E" stroke-width="1.3"/><path d="M173.5 32.5l-3.5 6h7Z M173.5 47.0l-3.5 -6h7Z" fill="#1E1E1E"/><line x1="173.5" y1="50.5" x2="173.5" y2="91.5" stroke="#1E1E1E" stroke-width="1.3"/><path d="M173.5 48.0l-3.5 6h7Z M173.5 94.0l-3.5 -6h7Z" fill="#1E1E1E"/><line x1="173.5" y1="97.5" x2="173.5" y2="107.5" stroke="#1E1E1E" stroke-width="1.3"/><path d="M173.5 95.0l-3.5 6h7Z M173.5 110.0l-3.5 -6h7Z" fill="#1E1E1E"/></svg>
<svg class="s" style="left:31px;top:745.4px" width="230" height="140"><defs><linearGradient id="pg2" x1="0" y1="0" x2="1" y2="1"><stop offset="0" stop-color="#F6E0E2"/><stop offset="0.5" stop-color="#F2D2D4"/><stop offset="1" stop-color="#D98F94"/></linearGradient><linearGradient id="pg22" x1="0" y1="1" x2="1" y2="0"><stop offset="0" stop-color="#D98F94"/><stop offset="0.5" stop-color="#F2D2D4"/><stop offset="1" stop-color="#F6E0E2"/></linearGradient><linearGradient id="wb2" x1="0" y1="0" x2="0" y2="1"><stop offset="0" stop-color="#FFFFFF"/><stop offset="1" stop-color="#B8CBE4"/></linearGradient></defs><rect x="10.0" y="32.0" width="68.5" height="78.5" fill="url(#pg22)" stroke="#1E1E1E" stroke-width="1.3" /><rect x="91.5" y="32.0" width="68.5" height="78.5" fill="url(#pg2)" stroke="#1E1E1E" stroke-width="1.3" /><line x1="10.0" y1="68.0" x2="48.0" y2="68.0" stroke="#F08A24" stroke-width="1" stroke-dasharray="3 2"/><line x1="122.4" y1="68.0" x2="160.0" y2="68.0" stroke="#F08A24" stroke-width="1" stroke-dasharray="3 2"/><line x1="10.0" y1="75.0" x2="48.0" y2="75.0" stroke="#F08A24" stroke-width="1" stroke-dasharray="3 2"/><line x1="122.4" y1="75.0" x2="160.0" y2="75.0" stroke="#F08A24" stroke-width="1" stroke-dasharray="3 2"/><rect x="48.0" y="47.5" width="74.4" height="47.0" fill="url(#wb2)" stroke="#1E1E1E" stroke-width="1.3" /><line x1="48.5" y1="16.0" x2="48.5" y2="47.5" stroke="#1E1E1E" stroke-width="1.2" stroke-dasharray="2.5 2"/><line x1="122.1" y1="16.0" x2="122.1" y2="124.5" stroke="#1E1E1E" stroke-width="1.2" stroke-dasharray="2.5 2"/><line x1="85.3" y1="97.5" x2="85.3" y2="124.5" stroke="#1E1E1E" stroke-width="1.2" stroke-dasharray="2.5 2"/><line x1="52.0" y1="22.0" x2="118.4" y2="22.0" stroke="#1E1E1E" stroke-width="1.3"/><path d="M50.0 22.0l6 -3.5v7Z M120.4 22.0l-6 -3.5v7Z" fill="#1E1E1E"/><line x1="89.3" y1="119.5" x2="118.4" y2="119.5" stroke="#1E1E1E" stroke-width="1.3"/><path d="M86.3 119.5l6 -3.5v7Z M121.4 119.5l-6 -3.5v7Z" fill="#1E1E1E"/><line x1="113.0" y1="32.0" x2="180.0" y2="32.0" stroke="#1E1E1E" stroke-width="1.2" stroke-dasharray="2.5 2"/><line x1="122.4" y1="47.5" x2="180.0" y2="47.5" stroke="#1E1E1E" stroke-width="1.2" stroke-dasharray="2.5 2"/><line x1="122.4" y1="94.5" x2="180.0" y2="94.5" stroke="#1E1E1E" stroke-width="1.2" stroke-dasharray="2.5 2"/><line x1="113.0" y1="110.5" x2="180.0" y2="110.5" stroke="#1E1E1E" stroke-width="1.2" stroke-dasharray="2.5 2"/><line x1="173.5" y1="35.0" x2="173.5" y2="44.5" stroke="#1E1E1E" stroke-width="1.3"/><path d="M173.5 32.5l-3.5 6h7Z M173.5 47.0l-3.5 -6h7Z" fill="#1E1E1E"/><line x1="173.5" y1="50.5" x2="173.5" y2="91.5" stroke="#1E1E1E" stroke-width="1.3"/><path d="M173.5 48.0l-3.5 6h7Z M173.5 94.0l-3.5 -6h7Z" fill="#1E1E1E"/><line x1="173.5" y1="97.5" x2="173.5" y2="107.5" stroke="#1E1E1E" stroke-width="1.3"/><path d="M173.5 95.0l-3.5 6h7Z M173.5 110.0l-3.5 -6h7Z" fill="#1E1E1E"/></svg>
<div class="t" style="left:111.5px;top:390.6px;font-size:14.4px;line-height:14.4px;color:#1E1E1E;font-weight:400;">H</div>
<div class="t" style="left:214.0px;top:423.4px;font-size:14.4px;line-height:14.4px;color:#1E1E1E;font-weight:400;">B1</div>
<div class="t" style="left:214.0px;top:452.4px;font-size:14.4px;line-height:14.4px;color:#1E1E1E;font-weight:400;">B</div>
<div class="t" style="left:214.0px;top:484.4px;font-size:14.4px;line-height:14.4px;color:#1E1E1E;font-weight:400;">B2</div>
<div class="t" style="left:129.0px;top:509.1px;font-size:14.4px;line-height:14.4px;color:#1E1E1E;font-weight:400;">Ho</div>
<div class="r" style="left:235px;top:425px;width:15px;height:15px;background:#FFFFFF;border:1px solid #A5B2D6"></div>
<div class="r" style="left:235px;top:487px;width:15px;height:15px;background:#FFFFFF;border:1px solid #A5B2D6"></div>
<div class="t" style="left:111.5px;top:752.6px;font-size:14.4px;line-height:14.4px;color:#1E1E1E;font-weight:400;">H</div>
<div class="t" style="left:214.0px;top:778.6px;font-size:14.4px;line-height:14.4px;color:#1E1E1E;font-weight:400;">B1</div>
<div class="t" style="left:214.0px;top:810.0px;font-size:14.4px;line-height:14.4px;color:#1E1E1E;font-weight:400;">B</div>
<div class="t" style="left:214.0px;top:841.5px;font-size:14.4px;line-height:14.4px;color:#1E1E1E;font-weight:400;">B2</div>
<div class="t" style="left:129.0px;top:869.1px;font-size:14.4px;line-height:14.4px;color:#1E1E1E;font-weight:400;">Ho</div>
<div class="r" style="left:235px;top:779px;width:15px;height:15px;background:#FFFFFF;border:1px solid #A5B2D6"></div>
<div class="r" style="left:235px;top:846px;width:15px;height:15px;background:#FFFFFF;border:1px solid #A5B2D6"></div>
<div class="r" style="left:40px;top:543px;width:15px;height:16px;background:#FFFFFF;border:1px solid #A5B2D6"></div>
<svg class="s" style="left:43px;top:546px" width="11" height="10" viewBox="0 0 11 10"><path d="M1 5L4 8.5L10 1" fill="none" stroke="#1E1E1E" stroke-width="1.8"/></svg>
<div class="t" style="left:62.5px;top:545.8px;font-size:14.4px;line-height:14.4px;color:#1E1E1E;font-weight:400;">Civata Otomatik Boyut</div>
<div class="r" style="left:40px;top:903px;width:15px;height:16px;background:#FFFFFF;border:1px solid #A5B2D6"></div>
<svg class="s" style="left:43px;top:906px" width="11" height="10" viewBox="0 0 11 10"><path d="M1 5L4 8.5L10 1" fill="none" stroke="#1E1E1E" stroke-width="1.8"/></svg>
<div class="t" style="left:62.5px;top:906.3px;font-size:14.4px;line-height:14.4px;color:#1E1E1E;font-weight:400;">Civata Otomatik Boyut</div>
<div class="t" style="left:46.2px;top:582.6px;font-size:14.4px;line-height:14.4px;color:#1E1E1E;font-weight:400;">Malzeme</div>
<div class="r" style="left:112px;top:573px;width:160px;height:28px;background:#FFFFFF;border:1px solid #A5B2D6"></div><div class="t" style="left:119.0px;top:582.3px;font-size:14.4px;line-height:14.4px;color:#1E1E1E;font-weight:400;">S235</div><svg class="s" style="left:258px;top:586px" width="10" height="5" viewBox="0 0 10 5"><path d="M0 0H10L5 5Z" fill="#1E1E1E"/></svg>
<div class="t" style="left:46.2px;top:614.3px;font-size:14.4px;line-height:14.4px;color:#1E1E1E;font-weight:400;">Kalınlık</div>
<div class="r" style="left:112px;top:606px;width:160px;height:28px;background:#FFFFFF;border:1px solid #A5B2D6"></div><div class="t" style="left:119.0px;top:615.3px;font-size:14.4px;line-height:14.4px;color:#1E1E1E;font-weight:400;">10 mm</div>
<div class="t" style="left:52.4px;top:646.8px;font-size:14.4px;line-height:14.4px;color:#1E1E1E;font-weight:400;">Ho</div>
<div class="r" style="left:112px;top:639px;width:160px;height:28px;background:#FFFFFF;border:1px solid #A5B2D6"></div><div class="t" style="left:119.0px;top:648.3px;font-size:14.4px;line-height:14.4px;color:#1E1E1E;font-weight:400;">40 mm</div>
<div class="t" style="left:286.5px;top:582.8px;font-size:14.4px;line-height:14.4px;color:#1E1E1E;font-weight:400;">H</div>
<div class="r" style="left:309px;top:574px;width:160px;height:28px;background:#FFFFFF;border:1px solid #A5B2D6"></div><div class="t" style="left:316.0px;top:583.3px;font-size:14.4px;line-height:14.4px;color:#1E1E1E;font-weight:400;">40 mm</div>
<div class="t" style="left:286.5px;top:614.8px;font-size:14.4px;line-height:14.4px;color:#1E1E1E;font-weight:400;">B</div>
<div class="r" style="left:309px;top:606px;width:160px;height:28px;background:#FFFFFF;border:1px solid #A5B2D6"></div><div class="t" style="left:316.0px;top:615.3px;font-size:14.4px;line-height:14.4px;color:#1E1E1E;font-weight:400;">120 mm</div>
<div class="t" style="left:286.5px;top:647.8px;font-size:14.4px;line-height:14.4px;color:#1E1E1E;font-weight:400;">B1</div>
<div class="r" style="left:309px;top:639px;width:160px;height:28px;background:#FFFFFF;border:1px solid #A5B2D6"></div><div class="t" style="left:316.0px;top:648.3px;font-size:14.4px;line-height:14.4px;color:#1E1E1E;font-weight:400;">35,2 mm</div>
<div class="t" style="left:286.5px;top:679.8px;font-size:14.4px;line-height:14.4px;color:#1E1E1E;font-weight:400;">B2</div>
<div class="r" style="left:309px;top:671px;width:160px;height:28px;background:#FFFFFF;border:1px solid #A5B2D6"></div><div class="t" style="left:316.0px;top:680.3px;font-size:14.4px;line-height:14.4px;color:#1E1E1E;font-weight:400;">35,2 mm</div>
<div class="t" style="left:46.2px;top:941.3px;font-size:14.4px;line-height:14.4px;color:#1E1E1E;font-weight:400;">Malzeme</div>
<div class="r" style="left:112px;top:933px;width:160px;height:28px;background:#FFFFFF;border:1px solid #A5B2D6"></div><div class="t" style="left:119.0px;top:942.3px;font-size:14.4px;line-height:14.4px;color:#1E1E1E;font-weight:400;">S235</div><svg class="s" style="left:258px;top:946px" width="10" height="5" viewBox="0 0 10 5"><path d="M0 0H10L5 5Z" fill="#1E1E1E"/></svg>
<div class="t" style="left:286.5px;top:941.3px;font-size:14.4px;line-height:14.4px;color:#1E1E1E;font-weight:400;">H</div>
<div class="r" style="left:309px;top:934px;width:160px;height:28px;background:#FFFFFF;border:1px solid #A5B2D6"></div><div class="t" style="left:316.0px;top:943.3px;font-size:14.4px;line-height:14.4px;color:#1E1E1E;font-weight:400;">120 mm</div></div>
<div class="r" style="left:493px;top:193px;width:7px;height:797px;background:#5D6B99;"></div>
<div class="r" style="left:493px;top:193px;width:1px;height:797px;background:#46588F;"></div>
<div class="r" style="left:0px;top:957px;width:338px;height:31px;background:#40568F;"></div>
<div class="r" style="left:108px;top:955px;width:102px;height:35px;background:#E8EDFC;"></div>
<svg class="s" style="left:5px;top:962px" width="19" height="21" viewBox="0 0 19 21"><rect x="0" y="0" width="8" height="4" rx="1" fill="#E0A858"/><rect x="9" y="8" width="9" height="5" rx="1" fill="#E0A858"/><rect x="9" y="15" width="9" height="5" rx="1" fill="#E0A858"/><path d="M3 4V18H9 M1 9H8" fill="none" stroke="#fff" stroke-width="1.4"/></svg>
<div class="t" style="left:30.9px;top:966.8px;font-size:14.4px;line-height:14.4px;color:#FFFFFF;font-weight:400;">Yapı Ağacı</div>
<svg class="s" style="left:117px;top:962px" width="25" height="24" viewBox="0 0 25 24"><rect x="0" y="0" width="19" height="4" fill="#1457A0"/><path d="M0.5 4V17H12 M18.5 4V11" fill="none" stroke="#8C96AA" stroke-width="1"/><path d="M3 8H7 M8 8H16 M3 11H7 M8 11H14 M3 14H7 M8 14H11" stroke="#7E889E" stroke-width="1.4"/><g transform="translate(18 18)"><circle r="4.8" fill="#1457A0"/><circle r="1.7" fill="#E7ECFB"/><rect x="-1.5" y="-7" width="3" height="3.5" fill="#1457A0" transform="rotate(0)"/><rect x="-1.5" y="-7" width="3" height="3.5" fill="#1457A0" transform="rotate(45)"/><rect x="-1.5" y="-7" width="3" height="3.5" fill="#1457A0" transform="rotate(90)"/><rect x="-1.5" y="-7" width="3" height="3.5" fill="#1457A0" transform="rotate(135)"/><rect x="-1.5" y="-7" width="3" height="3.5" fill="#1457A0" transform="rotate(180)"/><rect x="-1.5" y="-7" width="3" height="3.5" fill="#1457A0" transform="rotate(225)"/><rect x="-1.5" y="-7" width="3" height="3.5" fill="#1457A0" transform="rotate(270)"/><rect x="-1.5" y="-7" width="3" height="3.5" fill="#1457A0" transform="rotate(315)"/></g></svg>
<div class="t" style="left:145.5px;top:966.8px;font-size:14.4px;line-height:14.4px;color:#1E1E1E;font-weight:400;">Kolon Ek</div>
<svg class="s" style="left:219px;top:962px" width="22" height="22" viewBox="0 0 22 22"><circle cx="11" cy="11" r="11" fill="#C4281A"/><rect x="9.5" y="4" width="3" height="9" rx="1" fill="#fff"/><circle cx="11" cy="17" r="1.7" fill="#fff"/></svg>
<div class="t" style="left:247.4px;top:966.8px;font-size:14.4px;line-height:14.4px;color:#FFFFFF;font-weight:400;">Hata Kontrol</div>
<div class="r" style="left:499px;top:193px;width:163px;height:33px;background:#F5CC84;"></div>
<div class="r" style="left:499px;top:223px;width:1376px;height:3px;background:#F5CC84;"></div>
<svg class="s" style="left:513px;top:198px" width="23" height="21" viewBox="0 0 23 21"><path d="M5 0L10 10" stroke="#4F5E88" stroke-width="1"/><path d="M5 0L0 9L5 10Z" fill="#4F5E88"/><circle cx="8" cy="14" r="6" fill="none" stroke="#4F5E88" stroke-width="1.6"/><path d="M9 8L17 4L22 8L14 12Z" fill="none" stroke="#4F5E88" stroke-width="0.9"/><path d="M14 12Q11 14 14 18L22 14" fill="none" stroke="#4F5E88" stroke-width="0.9"/></svg>
<div class="t" style="left:540.4px;top:201.8px;font-size:14.4px;line-height:14.4px;color:#1E1E1E;font-weight:400;letter-spacing:-0.4px">3D Bakış</div>
<svg class="s" style="left:620px;top:205px" width="15" height="9" viewBox="0 0 15 9"><rect x="0" y="3.5" width="5" height="1.4" fill="#fff"/><path d="M5 0.5H6.5V2H13V7H6.5V8.5H5Z" fill="#fff"/><rect x="7" y="3" width="5" height="3" fill="#F5CC84"/></svg>
<svg class="s" style="left:641px;top:204px" width="12" height="11" viewBox="0 0 12 11"><path d="M1 1L11 10 M11 1L1 10" stroke="#1E1E1E" stroke-width="1.8"/></svg>
<div class="r" style="left:499px;top:226px;width:1px;height:764px;background:#3F5490;"></div>
<div class="r" style="left:500px;top:226px;width:1375px;height:762px;background:linear-gradient(#FFFFFF 0%, #808080 100%)"></div>
<svg class="s" style="left:0px;top:0px" width="1914" height="1016"><defs><linearGradient id="colsh" x1="0" y1="0" x2="0" y2="1"><stop offset="0" stop-color="#000" stop-opacity="0"/><stop offset="0.15" stop-color="#000" stop-opacity="0"/><stop offset="1" stop-color="#000" stop-opacity="0.11"/></linearGradient></defs><rect x="993" y="226" width="119" height="762" fill="#E96B6B"/><rect x="993" y="226" width="1.4" height="762" fill="#6E1E1E"/><rect x="1057" y="226" width="4" height="762" fill="#B04444"/><rect x="1057" y="226" width="1" height="762" fill="#7A2020"/><rect x="1060.3" y="226" width="1" height="762" fill="#7A2020"/><rect x="1061.3" y="226" width="13.7" height="762" fill="#E46C6C"/><rect x="1075" y="226" width="1.3" height="762" fill="#6E1E1E"/><rect x="1076.3" y="226" width="10.7" height="762" fill="#F06C6C"/><rect x="1087" y="226" width="1.3" height="762" fill="#6E1E1E"/><rect x="1088.3" y="226" width="20.7" height="762" fill="#E96B6B"/><rect x="1109" y="226" width="3" height="762" fill="#B84545"/><rect x="1111.3" y="226" width="1" height="762" fill="#7E2A2A"/><rect x="993" y="226" width="119.3" height="762" fill="url(#colsh)"/><path d="M1051.8 543L1109.3 555.7V642L1051.8 629Z" fill="none" stroke="#F08A20" stroke-width="0.9" opacity="0.55"/><g opacity="0.6"><circle cx="1057.5" cy="562" r="6.5" fill="none" stroke="#F08A20" stroke-width="1.1"/><circle cx="1056" cy="564" r="3.2" fill="none" stroke="#F08A20" stroke-width="0.9"/></g><g opacity="0.6"><circle cx="1057.5" cy="582.5" r="6.5" fill="none" stroke="#F08A20" stroke-width="1.1"/><circle cx="1056" cy="584.5" r="3.2" fill="none" stroke="#F08A20" stroke-width="0.9"/></g><g opacity="0.6"><circle cx="1057.5" cy="602.2" r="6.5" fill="none" stroke="#F08A20" stroke-width="1.1"/><circle cx="1056" cy="604.2" r="3.2" fill="none" stroke="#F08A20" stroke-width="0.9"/></g><path d="M1046 612V606Q1046 603 1050 604L1058 606 M1076 611.7Q1088 609 1094 616L1110.9 618.7V622" fill="none" stroke="#7A1E1E" stroke-width="1.2"/><path d="M1043.4 507.1V569" fill="none" stroke="#9040F0" stroke-width="0.9" opacity="0.7"/><path d="M964 597.2L1043.4 507.1L1141.2 526.6" fill="none" stroke="#9040F0" stroke-width="1.3"/><path d="M934 691L1042.2 568.7" fill="none" stroke="#F41616" stroke-width="1.1"/><path d="M1042.2 568.7L1112 582.6" fill="none" stroke="#F41616" stroke-width="1" opacity="0.45"/><path d="M1112 582.6L1171.4 594.5L1062.2 717.4" fill="none" stroke="#F41616" stroke-width="1.1"/><g><polygon points="1100.7,570.9 1094.5,574.3 1088.3,570.9 1088.3,564.1 1094.5,560.7 1100.7,564.1" fill="#D496C4" stroke="#F2F020" stroke-width="1.6"/><ellipse cx="1091" cy="571.0" rx="5.2" ry="5" fill="#C89AE0" stroke="#F2F020" stroke-width="1.3"/><ellipse cx="1089.8" cy="572.5" rx="3" ry="2.8" fill="#C89AE0" stroke="#F2F020" stroke-width="0.8"/></g><g><polygon points="1100.7,591.4 1094.5,594.8 1088.3,591.4 1088.3,584.6 1094.5,581.2 1100.7,584.6" fill="#D496C4" stroke="#F2F020" stroke-width="1.6"/><ellipse cx="1091" cy="591.5" rx="5.2" ry="5" fill="#C89AE0" stroke="#F2F020" stroke-width="1.3"/><ellipse cx="1089.8" cy="593" rx="3" ry="2.8" fill="#C89AE0" stroke="#F2F020" stroke-width="0.8"/></g><g><polygon points="1100.7,611.9 1094.5,615.3 1088.3,611.9 1088.3,605.1 1094.5,601.7 1100.7,605.1" fill="#D496C4" stroke="#F2F020" stroke-width="1.6"/><ellipse cx="1091" cy="612.0" rx="5.2" ry="5" fill="#C89AE0" stroke="#F2F020" stroke-width="1.3"/><ellipse cx="1089.8" cy="613.5" rx="3" ry="2.8" fill="#C89AE0" stroke="#F2F020" stroke-width="0.8"/></g><g><polygon points="1100.7,632.4 1094.5,635.8 1088.3,632.4 1088.3,625.6 1094.5,622.2 1100.7,625.6" fill="#D496C4" stroke="#F2F020" stroke-width="1.6"/><ellipse cx="1091" cy="632.5" rx="5.2" ry="5" fill="#C89AE0" stroke="#F2F020" stroke-width="1.3"/><ellipse cx="1089.8" cy="634" rx="3" ry="2.8" fill="#C89AE0" stroke="#F2F020" stroke-width="0.8"/></g><g><polygon points="1100.7,652.9 1094.5,656.3 1088.3,652.9 1088.3,646.1 1094.5,642.7 1100.7,646.1" fill="#D496C4" stroke="#F2F020" stroke-width="1.6"/><ellipse cx="1091" cy="653.0" rx="5.2" ry="5" fill="#C89AE0" stroke="#F2F020" stroke-width="1.3"/><ellipse cx="1089.8" cy="654.5" rx="3" ry="2.8" fill="#C89AE0" stroke="#F2F020" stroke-width="0.8"/></g><g><polygon points="1100.7,673.4 1094.5,676.8 1088.3,673.4 1088.3,666.6 1094.5,663.2 1100.7,666.6" fill="#D496C4" stroke="#F2F020" stroke-width="1.6"/><ellipse cx="1091" cy="673.5" rx="5.2" ry="5" fill="#C89AE0" stroke="#F2F020" stroke-width="1.3"/><ellipse cx="1089.8" cy="675" rx="3" ry="2.8" fill="#C89AE0" stroke="#F2F020" stroke-width="0.8"/></g><path d="M1060.5 615.6L1073 607.7V666L1060.5 678.6Z" fill="#B88ACB" fill-opacity="0.9" stroke="#F2F020" stroke-width="1"/><ellipse cx="1067" cy="634.5" rx="5.5" ry="5" fill="#C8A0E0" stroke="#F2F020" stroke-width="1.2"/><ellipse cx="1067" cy="656.5" rx="5.5" ry="5" fill="#C8A0E0" stroke="#F2F020" stroke-width="1.2"/><ellipse cx="1064" cy="667" rx="5.5" ry="5" fill="#C8A0E0" stroke="#F2F020" stroke-width="1.2"/><polygon points="1082.0,625.0 1079.0,630.2 1073.0,630.2 1070.0,625.0 1073.0,619.8 1079.0,619.8" fill="#C8A0E0" stroke="#F2F020" stroke-width="1.3"/><ellipse cx="1082" cy="625" rx="2.5" ry="4" fill="#D8B0E8" stroke="#F2F020" stroke-width="0.9"/><polygon points="1082.0,645.5 1079.0,650.7 1073.0,650.7 1070.0,645.5 1073.0,640.3 1079.0,640.3" fill="#C8A0E0" stroke="#F2F020" stroke-width="1.3"/><ellipse cx="1082" cy="645.5" rx="2.5" ry="4" fill="#D8B0E8" stroke="#F2F020" stroke-width="0.9"/><path d="M994.8 607.2L1054.4 617.6V743L994.8 733.3Z" fill="#B08ACE" fill-opacity="0.93" stroke="#F2F020" stroke-width="1.8"/><path d="M997.5 612L1051.5 621.5 M1051.5 621.5V740" stroke="#F2F020" stroke-width="0.8" opacity="0.8"/><ellipse cx="1012.0" cy="628.0" rx="6" ry="5.5" fill="none" stroke="#E8A070" stroke-width="0.7" opacity="0.45"/><ellipse cx="1036.0" cy="636.0" rx="6" ry="5.5" fill="none" stroke="#E8A070" stroke-width="0.7" opacity="0.45"/><polygon points="1011.3,621.7 1008.0,626.5 1001.4,626.5 998.1,621.7 1001.4,616.9 1008.0,616.9" fill="#C297DA" stroke="#F2F020" stroke-width="1.3"/><polygon points="1046.5,629.5 1043.2,634.3 1036.6,634.3 1033.3,629.5 1036.6,624.7 1043.2,624.7" fill="#C297DA" stroke="#F2F020" stroke-width="1.3"/><ellipse cx="1012.0" cy="648.4" rx="6" ry="5.5" fill="none" stroke="#E8A070" stroke-width="0.7" opacity="0.45"/><ellipse cx="1036.0" cy="656.4" rx="6" ry="5.5" fill="none" stroke="#E8A070" stroke-width="0.7" opacity="0.45"/><polygon points="1011.3,642.1 1008.0,646.9 1001.4,646.9 998.1,642.1 1001.4,637.3 1008.0,637.3" fill="#C297DA" stroke="#F2F020" stroke-width="1.3"/><polygon points="1046.5,649.9 1043.2,654.7 1036.6,654.7 1033.3,649.9 1036.6,645.1 1043.2,645.1" fill="#C297DA" stroke="#F2F020" stroke-width="1.3"/><ellipse cx="1012.0" cy="668.8" rx="6" ry="5.5" fill="none" stroke="#E8A070" stroke-width="0.7" opacity="0.45"/><ellipse cx="1036.0" cy="676.8" rx="6" ry="5.5" fill="none" stroke="#E8A070" stroke-width="0.7" opacity="0.45"/><polygon points="1011.3,662.5 1008.0,667.3 1001.4,667.3 998.1,662.5 1001.4,657.7 1008.0,657.7" fill="#C297DA" stroke="#F2F020" stroke-width="1.3"/><polygon points="1046.5,670.3 1043.2,675.1 1036.6,675.1 1033.3,670.3 1036.6,665.5 1043.2,665.5" fill="#C297DA" stroke="#F2F020" stroke-width="1.3"/><ellipse cx="1012.0" cy="689.2" rx="6" ry="5.5" fill="none" stroke="#E8A070" stroke-width="0.7" opacity="0.45"/><ellipse cx="1036.0" cy="697.2" rx="6" ry="5.5" fill="none" stroke="#E8A070" stroke-width="0.7" opacity="0.45"/><polygon points="1011.3,682.9 1008.0,687.7 1001.4,687.7 998.1,682.9 1001.4,678.1 1008.0,678.1" fill="#C297DA" stroke="#F2F020" stroke-width="1.3"/><polygon points="1046.5,690.7 1043.2,695.5 1036.6,695.5 1033.3,690.7 1036.6,685.9 1043.2,685.9" fill="#C297DA" stroke="#F2F020" stroke-width="1.3"/><ellipse cx="1012.0" cy="709.6" rx="6" ry="5.5" fill="none" stroke="#E8A070" stroke-width="0.7" opacity="0.45"/><ellipse cx="1036.0" cy="717.6" rx="6" ry="5.5" fill="none" stroke="#E8A070" stroke-width="0.7" opacity="0.45"/><polygon points="1011.3,703.3 1008.0,708.1 1001.4,708.1 998.1,703.3 1001.4,698.5 1008.0,698.5" fill="#C297DA" stroke="#F2F020" stroke-width="1.3"/><polygon points="1046.5,711.1 1043.2,715.9 1036.6,715.9 1033.3,711.1 1036.6,706.3 1043.2,706.3" fill="#C297DA" stroke="#F2F020" stroke-width="1.3"/><ellipse cx="1012.0" cy="730.0" rx="6" ry="5.5" fill="none" stroke="#E8A070" stroke-width="0.7" opacity="0.45"/><ellipse cx="1036.0" cy="738.0" rx="6" ry="5.5" fill="none" stroke="#E8A070" stroke-width="0.7" opacity="0.45"/><polygon points="1011.3,723.7 1008.0,728.5 1001.4,728.5 998.1,723.7 1001.4,718.9 1008.0,718.9" fill="#C297DA" stroke="#F2F020" stroke-width="1.3"/><polygon points="1046.5,731.5 1043.2,736.3 1036.6,736.3 1033.3,731.5 1036.6,726.7 1043.2,726.7" fill="#C297DA" stroke="#F2F020" stroke-width="1.3"/><path d="M964 597.2L1060 616.7L1141.2 526.6 M964 597.2V758.7L1061.2 778.2L1141.6 688.5V526.6 M1060.5 616.7V778.2" fill="none" stroke="#9040F0" stroke-width="1.4"/><path d="M934 691L1062.2 717.4L1171.4 594.5" fill="none" stroke="#F41616" stroke-width="1.2"/></svg><div class="t" style="left:1051.5px;top:786.2px;font-size:14.4px;line-height:14.4px;color:#000;font-weight:400;">2</div><svg class="s" style="left:555px;top:888px" width="50" height="50" viewBox="0 0 50 50"><rect x="5" y="12" width="4.6" height="29" fill="#F00000"/><path d="M2.5 13L7.3 2L12 13Z" fill="#F00000"/><circle cx="7" cy="40.5" r="3" fill="#F00000"/><path d="M11 36.5L21 25.5L48 30.5L38 41Z" fill="#0000EE"/><path d="M9 39L44 45" stroke="#B8B8B8" stroke-width="3"/><path d="M40 41L50 46L40 48Z" fill="#D8D8D8"/><path d="M8 38L20 26" stroke="#B0B0B0" stroke-width="3"/></svg><div class="t" style="left:562.5px;top:872.8px;font-size:14.4px;line-height:14.4px;color:#000;font-weight:400;">Z</div><div class="t" style="left:580.5px;top:893.7px;font-size:14.4px;line-height:14.4px;color:#000;font-weight:400;">Y</div><div class="t" style="left:606.0px;top:923.8px;font-size:14.4px;line-height:14.4px;color:#000;font-weight:400;">X</div><div class="r" style="left:1029px;top:228px;width:350px;height:50px;background:rgba(206,214,240,0.9)"></div>
<svg class="s" style="left:1036px;top:235px" width="36" height="36" viewBox="0 0 36 36"><rect x="1.5" y="1.5" width="33" height="33" rx="1.5" fill="none" stroke="#5F6B85" stroke-width="2.6"/><path d="M5 5H14L11.5 7.5L15 11L11 15L7.5 11.5L5 14Z" fill="#5F6B85"/><path d="M31 5H22L24.5 7.5L21 11L25 15L28.5 11.5L31 14Z" fill="#5F6B85"/><path d="M5 31H14L11.5 28.5L15 25L11 21L7.5 24.5L5 22Z" fill="#5F6B85"/><path d="M31 31H22L24.5 28.5L21 25L25 21L28.5 24.5L31 22Z" fill="#5F6B85"/></svg>
<svg class="s" style="left:1085px;top:243px" width="36" height="22" viewBox="0 0 36 22"><path d="M14 16C6 15 1 12 1 9C1 5 8 1 17 1C27 1 34 4 34 8.5C34 11 31 13.5 25 15" fill="none" stroke="#5F6B85" stroke-width="2.2"/><path d="M13 10L20 15.5L13 21Z" fill="#5F6B85"/></svg>
<svg class="s" style="left:1131px;top:233px" width="40" height="40" viewBox="0 0 40 40"><path d="M19.8 0L27.8 8.2H22.3V15H17.3V8.2H11.8Z M19.8 39.5L27.8 31.3H22.3V24.5H17.3V31.3H11.8Z M0.3 19.6L8.2 11.6V17.1H15V22.1H8.2V27.6Z M39.3 19.6L31.4 11.6V17.1H24.6V22.1H31.4V27.6Z" fill="#5F6B85"/></svg>
<svg class="s" style="left:1180px;top:233px" width="41" height="40" viewBox="0 0 41 40"><path d="M20 0L38 7L20 13L2 7Z" fill="#5F6B85"/><path d="M0 10L18 16.5V39.5L0 33Z" fill="#5F6B85"/><path d="M22 16.5L40 10V33L22 39.5Z" fill="#5F6B85"/></svg>
<svg class="s" style="left:1229px;top:251px" width="10" height="6" viewBox="0 0 10 6"><path d="M0 0H10L5 5.5Z" fill="#1E1E1E"/></svg>
<svg class="s" style="left:1252px;top:235px" width="31" height="36" viewBox="0 0 31 36"><path d="M0 0H30V4.5L18 18V32L13 36V18L0 4.5Z" fill="#5F6B85"/></svg>
<svg class="s" style="left:1296px;top:251px" width="10" height="6" viewBox="0 0 10 6"><path d="M0 0H10L5 5.5Z" fill="#1E1E1E"/></svg>
<svg class="s" style="left:1315px;top:234px" width="40" height="38" viewBox="0 0 40 38"><path d="M20 0V11 M20 11L7.5 17.5V31L20 37L32.5 31V17.5Z M7.5 17.5L20 24L32.5 17.5 M20 24V37 M7.5 31L0 35 M32.5 31L40 35" fill="none" stroke="#5F6B85" stroke-width="2.2" stroke-linejoin="round"/></svg>
<svg class="s" style="left:1364px;top:251px" width="10" height="6" viewBox="0 0 10 6"><path d="M0 0H10L5 5.5Z" fill="#1E1E1E"/></svg>
<div class="r" style="left:500px;top:988px;width:1375px;height:1px;background:#9A9A9A;"></div>
<div class="r" style="left:499px;top:989px;width:1376px;height:1px;background:#3F5490;"></div>
<div class="t" style="left:-4.0px;top:1001.1px;font-size:14.4px;line-height:14.4px;color:#FFFFFF;font-weight:400;">Demo</div>
<div class="r" style="left:44px;top:993px;width:1px;height:23px;background:#6E7BA6"></div>
<div class="t" style="left:52.5px;top:1000.6px;font-size:14.4px;line-height:14.4px;color:#FFFFFF;font-weight:400;">Son işlem süresi (0,171) -&gt; 1 Birleşim Eklendi</div>
<div class="r" style="left:1603px;top:993px;width:1px;height:23px;background:#6E7BA6"></div>
<div class="t" style="left:1617.0px;top:1001.4px;font-size:14.4px;line-height:14.4px;color:#FFFFFF;font-weight:400;">Birimler</div>
<svg class="s" style="left:1677px;top:1006px" width="9" height="6" viewBox="0 0 9 6"><path d="M0 0H9L4.5 5.5Z" fill="#fff"/></svg>
<div class="t" style="left:1695.2px;top:1001.4px;font-size:14.4px;line-height:14.4px;color:#FFFFFF;font-weight:400;">Ortho</div>
<div class="t" style="left:1743.2px;top:1001.4px;font-size:14.4px;line-height:14.4px;color:#FFFFFF;font-weight:400;">Nokta Yakalama</div>
<svg class="s" style="left:1859px;top:1006px" width="9" height="6" viewBox="0 0 9 6"><path d="M0 0H9L4.5 5.5Z" fill="#fff"/></svg>
<div class="r" style="left:1px;top:143px;width:236px;height:136px;border:5px solid #ED1C24"></div>
</body></html>
